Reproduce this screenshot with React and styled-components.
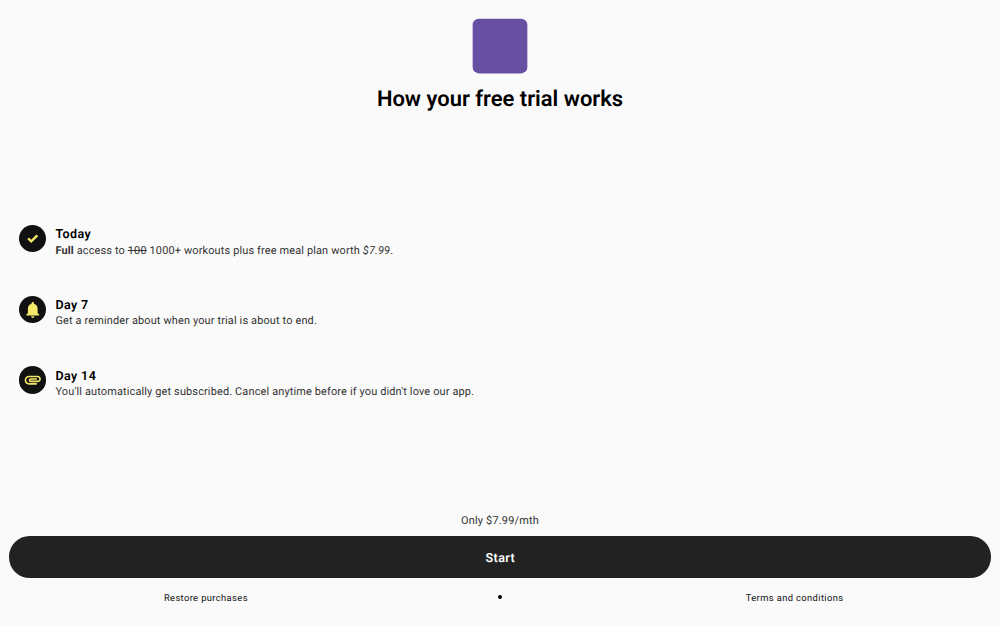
import React from "react";
import styled, { createGlobalStyle } from "styled-components";

const GlobalStyle = createGlobalStyle`
  * { box-sizing: border-box; }
  body {
    margin: 0;
    background: #fafafa;
    font-family: Roboto, sans-serif;
    text-rendering: geometricPrecision;
  }
`;

const Page = styled.main`
  display: flex;
  flex-direction: column;
  height: 625px;
  padding: 18px 9.375px 0;
  background: #fafafa;
  color: #000;
`;

const Header = styled.header`
  display: flex;
  flex-direction: column;
  align-items: center;
  height: 207px;
`;

const Logo = styled.svg`
  flex: none;
  width: 56px;
  height: 56px;
  fill: #6750a4;
`;

const Title = styled.h1`
  margin: 12px 0 0;
  font-size: 21.95px;
  line-height: 28px;
  font-weight: 600;
  white-space: nowrap;
`;

const Timeline = styled.ol`
  display: flex;
  flex-direction: column;
  gap: 43.4px;
  margin: 0;
  padding: 0 9.375px;
  list-style: none;
`;

const Step = styled.li`
  display: flex;
  gap: 9.375px;
  height: 27.35px;
`;

const Badge = styled.span`
  display: flex;
  flex: none;
  align-items: center;
  justify-content: center;
  width: 27.35px;
  height: 27.35px;
  border-radius: 50%;
  background: #111;
`;

const Glyph = styled.svg`
  width: 19.53px;
  height: 19.53px;
  fill: #f5e769;
`;

const StepText = styled.div`
  padding-top: 2.4px;
  white-space: nowrap;
`;

const StepTitle = styled.h2`
  margin: 0;
  font-size: 12.5px;
  line-height: 16px;
  font-weight: 600;
  letter-spacing: 0.39px;
`;

const StepBody = styled.p`
  margin: -0.9px 0 0;
  font-size: 10.94px;
  line-height: 15px;
  letter-spacing: 0.145px;
  color: #333;
`;

const Bottom = styled.footer`
  display: flex;
  flex-direction: column;
  margin-top: auto;
  height: 112.8px;
`;

const Price = styled.p`
  margin: 0;
  height: 24.2px;
  padding-top: 0.8px;
  font-size: 10.94px;
  line-height: 15.6px;
  letter-spacing: 0.2px;
  text-align: center;
  color: #333;
`;

const StartButton = styled.button`
  flex: none;
  height: 41.4px;
  padding: 2.6px 0 0 0.6px;
  border: 0;
  border-radius: 20.7px;
  background: #222;
  color: #fff;
  font-family: inherit;
  font-size: 12.5px;
  font-weight: 600;
  letter-spacing: 0.39px;
  text-rendering: inherit;
`;

const Links = styled.nav`
  display: grid;
  grid-template-columns: 2fr 1fr 2fr;
  align-items: center;
  justify-items: center;
  height: 38.4px;
`;

const Link = styled.a`
  padding: 4px 0 0 0.5px;
  font-size: 9.375px;
  line-height: 12.5px;
  letter-spacing: 0.38px;
  color: #111;
`;

const Dot = styled.span`
  width: 4px;
  height: 4px;
  border-radius: 50%;
  background: #000;
`;

const icons = {
  check: "M10.1 17.3 5.3 12.5 7.4 10.4 10.1 13.1 16.6 6.7 18.7 8.8Z",
  bell: "M12 22c1.1 0 2-.9 2-2h-4c0 1.1.89 2 2 2zm6-6v-5c0-3.07-1.64-5.64-4.5-6.32V4c0-.83-.67-1.5-1.5-1.5s-1.5.67-1.5 1.5v.68C7.63 5.36 6 7.92 6 11v5l-2 2v1h16v-1l-2-2z",
  clip: "M2 12.5C2 9.46 4.46 7 7.5 7H18c2.21 0 4 1.79 4 4s-1.79 4-4 4H9.5C8.12 15 7 13.88 7 12.5S8.12 10 9.5 10H17v2H9.41c-.55 0-.55 1 0 1H18c1.1 0 2-.9 2-2s-.9-2-2-2H7.5C5.57 9 4 10.57 4 12.5S5.57 16 7.5 16H17v2H7.5C4.46 18 2 15.54 2 12.5z",
};

const steps = [
  {
    icon: "check",
    title: "Today",
    body: (
      <>
        <b>Full</b> access to <s>100</s> 1000+ workouts plus free meal plan worth <i>$7.99</i>.
      </>
    ),
  },
  { icon: "bell", title: "Day 7", body: "Get a reminder about when your trial is about to end." },
  {
    icon: "clip",
    title: "Day 14",
    body: "You'll automatically get subscribed. Cancel anytime before if you didn't love our app.",
  },
];

export default function App() {
  return (
    <Page>
      <GlobalStyle />
      <Header>
        <Logo viewBox="0 0 56 56" aria-hidden="true">
          <rect x="0.65" y="0.75" width="54.7" height="54.7" rx="6.25" />
        </Logo>
        <Title>How your free trial works</Title>
      </Header>
      <Timeline>
        {steps.map((step) => (
          <Step key={step.title}>
            <Badge>
              <Glyph viewBox="0 0 24 24" aria-hidden="true">
                <path d={icons[step.icon]} />
              </Glyph>
            </Badge>
            <StepText>
              <StepTitle>{step.title}</StepTitle>
              <StepBody>{step.body}</StepBody>
            </StepText>
          </Step>
        ))}
      </Timeline>
      <Bottom>
        <Price>Only $7.99/mth</Price>
        <StartButton>Start</StartButton>
        <Links>
          <Link>Restore purchases</Link>
          <Dot />
          <Link>Terms and conditions</Link>
        </Links>
      </Bottom>
    </Page>
  );
}
